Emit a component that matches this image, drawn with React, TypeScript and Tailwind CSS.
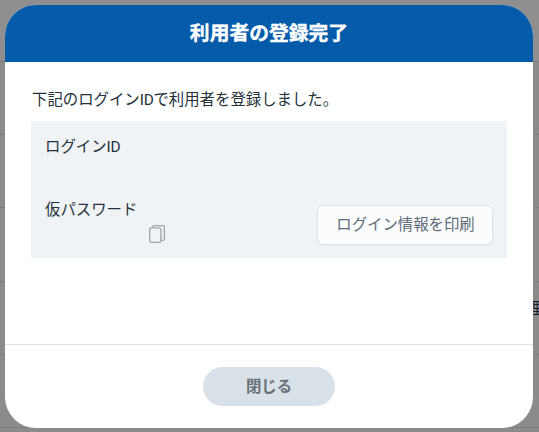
const rowHeights = ["h-[73px]", "h-[73px]", "h-[74px]", "h-[73px]", "h-[73px]"];

function CopyIcon() {
  return (
    <svg width="16" height="18" viewBox="0 0 16 18" fill="none" stroke="#9fa4a9" strokeWidth="1.3">
      <path d="M3.9 3V2A1.4 1.4 0 0 1 5.3 .6H13.9A1.5 1.5 0 0 1 15.4 2.1V13.8A1.5 1.5 0 0 1 13.9 15.3H12.2" />
      <rect x="0.7" y="2.8" width="11.2" height="14.5" rx="1.6" />
    </svg>
  );
}

function Backdrop() {
  return (
    <div className="h-full bg-[#8b8b8b]">
      <div className="h-[62px] border-b border-[#7c7d7e] bg-[#8f8f8f]" />
      {rowHeights.map((height, i) => (
        <div key={i} className={`${height} border-b border-[#7c7d7e]`} />
      ))}
      <span className="absolute top-[298px] left-[527px] text-[15.4px] leading-[23px] text-[#17202a]">理</span>
    </div>
  );
}

export default function App() {
  return (
    <div className="relative h-[432px] w-[539px] overflow-hidden font-['Roboto','Noto_Sans_CJK_JP',sans-serif] text-[15.4px] leading-[23px] text-[#24313b]">
      <Backdrop />
      <section className="absolute top-[5px] left-[5px] flex h-[423px] w-[528px] flex-col overflow-hidden rounded-[31px] bg-white">
        <header className="flex h-[57px] shrink-0 items-center justify-center bg-[#035baa] pt-px">
          <h1 className="text-[19.8px] leading-[28px] font-bold text-white [-webkit-text-stroke:0.4px_white]">利用者の登録完了</h1>
        </header>
        <div className="flex-1 px-[26px] pt-[27px]">
          <p className="pl-px whitespace-nowrap">下記のログイン<span className="tracking-[-0.3px]">ID</span>で利用者を登録しました。</p>
          <div className="mt-[9px] flex h-[137px] w-[476px] justify-between bg-[#eff3f6] px-[14px] pt-[15px] pb-[13px]">
            <div>
              <p>ログイン<span className="tracking-[-0.3px]">ID</span></p>
              <p className="mt-[40px]">仮パスワード</p>
              <button className="mt-[3px] ml-[104px] block" aria-label="コピー">
                <CopyIcon />
              </button>
            </div>
            <button className="h-[40px] w-[176px] shrink-0 self-end rounded-[6px] border border-[#dce3e8] bg-[#fbfcfe] pl-px text-[#606c78] shadow-[0_1px_2px_rgba(0,0,0,0.04)]">
              ログイン情報を印刷
            </button>
          </div>
        </div>
        <footer className="flex h-[84px] shrink-0 justify-center border-t border-[#dfe0e1] pt-[22px]">
          <button className="h-[39px] w-[132px] rounded-full bg-[#d9e1e8] pt-px font-bold text-[#697077]">閉じる</button>
        </footer>
      </section>
    </div>
  );
}
